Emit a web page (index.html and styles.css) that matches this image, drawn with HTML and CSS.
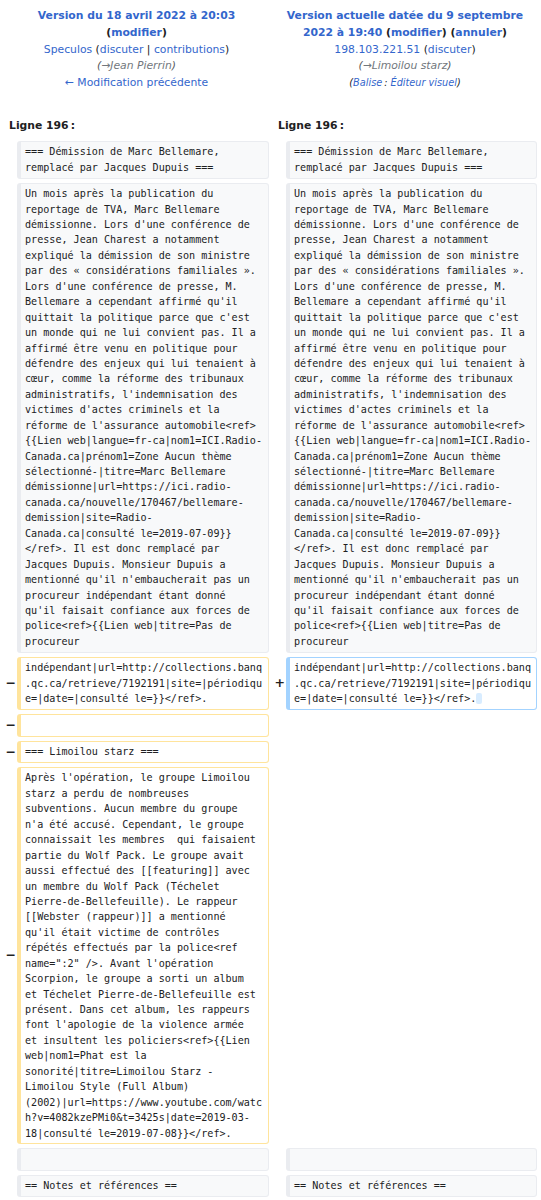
FILE: index.html
```html
<!DOCTYPE html>
<html lang="fr">
<head>
<meta charset="utf-8">
<title>Différence entre les versions</title>
<link rel="stylesheet" href="styles.css">
</head>
<body>
<table class="diff">
<colgroup><col class="col-marker"><col class="col-left"><col class="col-marker"><col class="col-right"></colgroup>
<tbody>
<tr class="diff-title">
<td colspan="2" class="diff-otitle">
<div class="title-line"><strong><a href="#" class="link">Version du 18 avril 2022 à 20:03</a></strong></div>
<div class="title-line"><strong>(<a href="#" class="link">modifier</a>)</strong></div>
<div class="title-line"><a href="#" class="link">Speculos</a> (<a href="#" class="link">discuter</a> | <a href="#" class="link">contributions</a>)</div>
<div class="title-line comment">(<span class="autocomment">→Jean Pierrin</span>)</div>
<div class="title-line"><a href="#" class="link">← Modification précédente</a></div>
</td>
<td colspan="2" class="diff-ntitle">
<div class="title-line"><strong><a href="#" class="link">Version actuelle datée du 9 septembre</a></strong></div>
<div class="title-line"><strong><a href="#" class="link">2022 à 19:40</a> (<a href="#" class="link">modifier</a>) (<a href="#" class="link">annuler</a>)</strong></div>
<div class="title-line"><a href="#" class="link">198.103.221.51</a> (<a href="#" class="link">discuter</a>)</div>
<div class="title-line comment">(<span class="autocomment">→Limoilou starz</span>)</div>
<div class="title-line"><span class="tags">(<a href="#" class="link">Balise</a>&#8239;: <a href="#" class="link">Éditeur visuel</a>)</span></div>
</td>
</tr>
<tr>
<td colspan="2" class="diff-lineno">Ligne 196&#8239;:</td>
<td colspan="2" class="diff-lineno">Ligne 196&#8239;:</td>
</tr>
<tr>
<td class="diff-marker"></td>
<td class="diff-line diff-context"><div>=== Démission de Marc Bellemare,
remplacé par Jacques Dupuis ===</div></td>
<td class="diff-marker"></td>
<td class="diff-line diff-context"><div>=== Démission de Marc Bellemare,
remplacé par Jacques Dupuis ===</div></td>
</tr>
<tr>
<td class="diff-marker"></td>
<td class="diff-line diff-context"><div>Un mois après la publication du
reportage de TVA, Marc Bellemare
démissionne. Lors d'une conférence de
presse, Jean Charest a notamment
expliqué la démission de son ministre
par des « considérations familiales ».
Lors d'une conférence de presse, M.
Bellemare a cependant affirmé qu'il
quittait la politique parce que c'est
un monde qui ne lui convient pas. Il a
affirmé être venu en politique pour
défendre des enjeux qui lui tenaient à
cœur, comme la réforme des tribunaux
administratifs, l'indemnisation des
victimes d'actes criminels et la
réforme de l'assurance automobile&lt;ref&gt;
{{Lien web|langue=fr-ca|nom1=ICI.Radio-
Canada.ca|prénom1=Zone Aucun thème
sélectionné-|titre=Marc Bellemare
démissionne|url=https://ici.radio-
canada.ca/nouvelle/170467/bellemare-
demission|site=Radio-
Canada.ca|consulté le=2019-07-09}}
&lt;/ref&gt;. Il est donc remplacé par
Jacques Dupuis. Monsieur Dupuis a
mentionné qu'il n'embaucherait pas un
procureur indépendant étant donné
qu'il faisait confiance aux forces de
police&lt;ref&gt;{{Lien web|titre=Pas de
procureur</div></td>
<td class="diff-marker"></td>
<td class="diff-line diff-context"><div>Un mois après la publication du
reportage de TVA, Marc Bellemare
démissionne. Lors d'une conférence de
presse, Jean Charest a notamment
expliqué la démission de son ministre
par des « considérations familiales ».
Lors d'une conférence de presse, M.
Bellemare a cependant affirmé qu'il
quittait la politique parce que c'est
un monde qui ne lui convient pas. Il a
affirmé être venu en politique pour
défendre des enjeux qui lui tenaient à
cœur, comme la réforme des tribunaux
administratifs, l'indemnisation des
victimes d'actes criminels et la
réforme de l'assurance automobile&lt;ref&gt;
{{Lien web|langue=fr-ca|nom1=ICI.Radio-
Canada.ca|prénom1=Zone Aucun thème
sélectionné-|titre=Marc Bellemare
démissionne|url=https://ici.radio-
canada.ca/nouvelle/170467/bellemare-
demission|site=Radio-
Canada.ca|consulté le=2019-07-09}}
&lt;/ref&gt;. Il est donc remplacé par
Jacques Dupuis. Monsieur Dupuis a
mentionné qu'il n'embaucherait pas un
procureur indépendant étant donné
qu'il faisait confiance aux forces de
police&lt;ref&gt;{{Lien web|titre=Pas de
procureur</div></td>
</tr>
<tr>
<td class="diff-marker"><span class="marker-glyph">−</span></td>
<td class="diff-line diff-deletedline"><div>indépendant|url=http://collections.banq
.qc.ca/retrieve/7192191|site=|périodiqu
e=|date=|consulté le=}}&lt;/ref&gt;.</div></td>
<td class="diff-marker"><span class="marker-glyph">+</span></td>
<td class="diff-line diff-addedline"><div>indépendant|url=http://collections.banq
.qc.ca/retrieve/7192191|site=|périodiqu
e=|date=|consulté le=}}&lt;/ref&gt;.<ins class="diffchange"> </ins></div></td>
</tr>
<tr>
<td class="diff-marker"><span class="marker-glyph">−</span></td>
<td class="diff-line diff-deletedline"><div><br></div></td>
<td colspan="2" class="diff-empty"></td>
</tr>
<tr>
<td class="diff-marker"><span class="marker-glyph">−</span></td>
<td class="diff-line diff-deletedline"><div>=== Limoilou starz ===</div></td>
<td colspan="2" class="diff-empty"></td>
</tr>
<tr>
<td class="diff-marker"><span class="marker-glyph">−</span></td>
<td class="diff-line diff-deletedline"><div>Après l'opération, le groupe Limoilou
starz a perdu de nombreuses
subventions. Aucun membre du groupe
n'a été accusé. Cependant, le groupe
connaissait les membres  qui faisaient
partie du Wolf Pack. Le groupe avait
aussi effectué des [[featuring]] avec
un membre du Wolf Pack (Téchelet
Pierre-de-Bellefeuille). Le rappeur
[[Webster (rappeur)]] a mentionné
qu'il était victime de contrôles
répétés effectués par la police&lt;ref
name=":2" /&gt;. Avant l'opération
Scorpion, le groupe a sorti un album
et Téchelet Pierre-de-Bellefeuille est
présent. Dans cet album, les rappeurs
font l'apologie de la violence armée
et insultent les policiers&lt;ref&gt;{{Lien
web|nom1=Phat est la
sonorité|titre=Limoilou Starz -
Limoilou Style (Full Album)
(2002)|url=https://www.youtube.com/watc
h?v=4082kzePMi0&amp;t=3425s|date=2019-03-
18|consulté le=2019-07-08}}&lt;/ref&gt;.</div></td>
<td colspan="2" class="diff-empty"></td>
</tr>
<tr>
<td class="diff-marker"></td>
<td class="diff-line diff-context"><div><br></div></td>
<td class="diff-marker"></td>
<td class="diff-line diff-context"><div><br></div></td>
</tr>
<tr>
<td class="diff-marker"></td>
<td class="diff-line diff-context"><div>== Notes et références ==</div></td>
<td class="diff-marker"></td>
<td class="diff-line diff-context"><div>== Notes et références ==</div></td>
</tr>
</tbody>
</table>
</body>
</html>
```

FILE: styles.css
```css
html,
body {
  margin: 0;
  padding: 0;
  background: #ffffff;
}

body {
  font-family: "DejaVu Sans", sans-serif;
  font-size: 10.8px;
  line-height: 16.8px;
  color: #202122;
}

.link {
  color: #3366cc;
  text-decoration: none;
}

.diff {
  width: 541px;
  table-layout: fixed;
  border-collapse: separate;
  border-spacing: 4px;
  margin: 0;
}

.col-marker {
  width: 9px;
}

.col-left {
  width: 252px;
}

.col-right {
  width: 251px;
}

.diff td {
  padding: 0;
}

.diff .diff-otitle,
.diff .diff-ntitle {
  text-align: center;
  vertical-align: top;
  padding-top: 4px;
}

.comment {
  font-style: italic;
  color: #54595d;
}

.autocomment {
  color: #72777d;
}

.tags {
  font-style: italic;
  font-size: 90%;
}

.diff .diff-lineno {
  font-weight: bold;
  padding: 22px 0 2px 5px;
}

.diff .diff-marker {
  text-align: right;
  vertical-align: middle;
  font-weight: bold;
  font-size: 12.5px;
  line-height: 1;
  color: #202122;
}

.marker-glyph {
  display: inline-block;
  margin-right: -3px;
}

.diff .diff-line {
  vertical-align: top;
  border-style: solid;
  border-width: 1px 1px 1px 4px;
  border-radius: 3.3px;
  padding: 2.5px 4px;
  font-family: "DejaVu Sans Mono", monospace;
  font-size: 10.1px;
  line-height: 15.44px;
  white-space: pre-wrap;
  overflow-wrap: break-word;
  color: #202122;
}

.diff-context {
  background: #f8f9fa;
  border-color: #eaecf0;
}

.diff-deletedline {
  background: #ffffff;
  border-color: #ffe49c;
}

.diff-addedline {
  background: #ffffff;
  border-color: #a3d3ff;
}

.diffchange {
  text-decoration: none;
  background: #d8ecff;
  border-radius: 2px;
}
```
